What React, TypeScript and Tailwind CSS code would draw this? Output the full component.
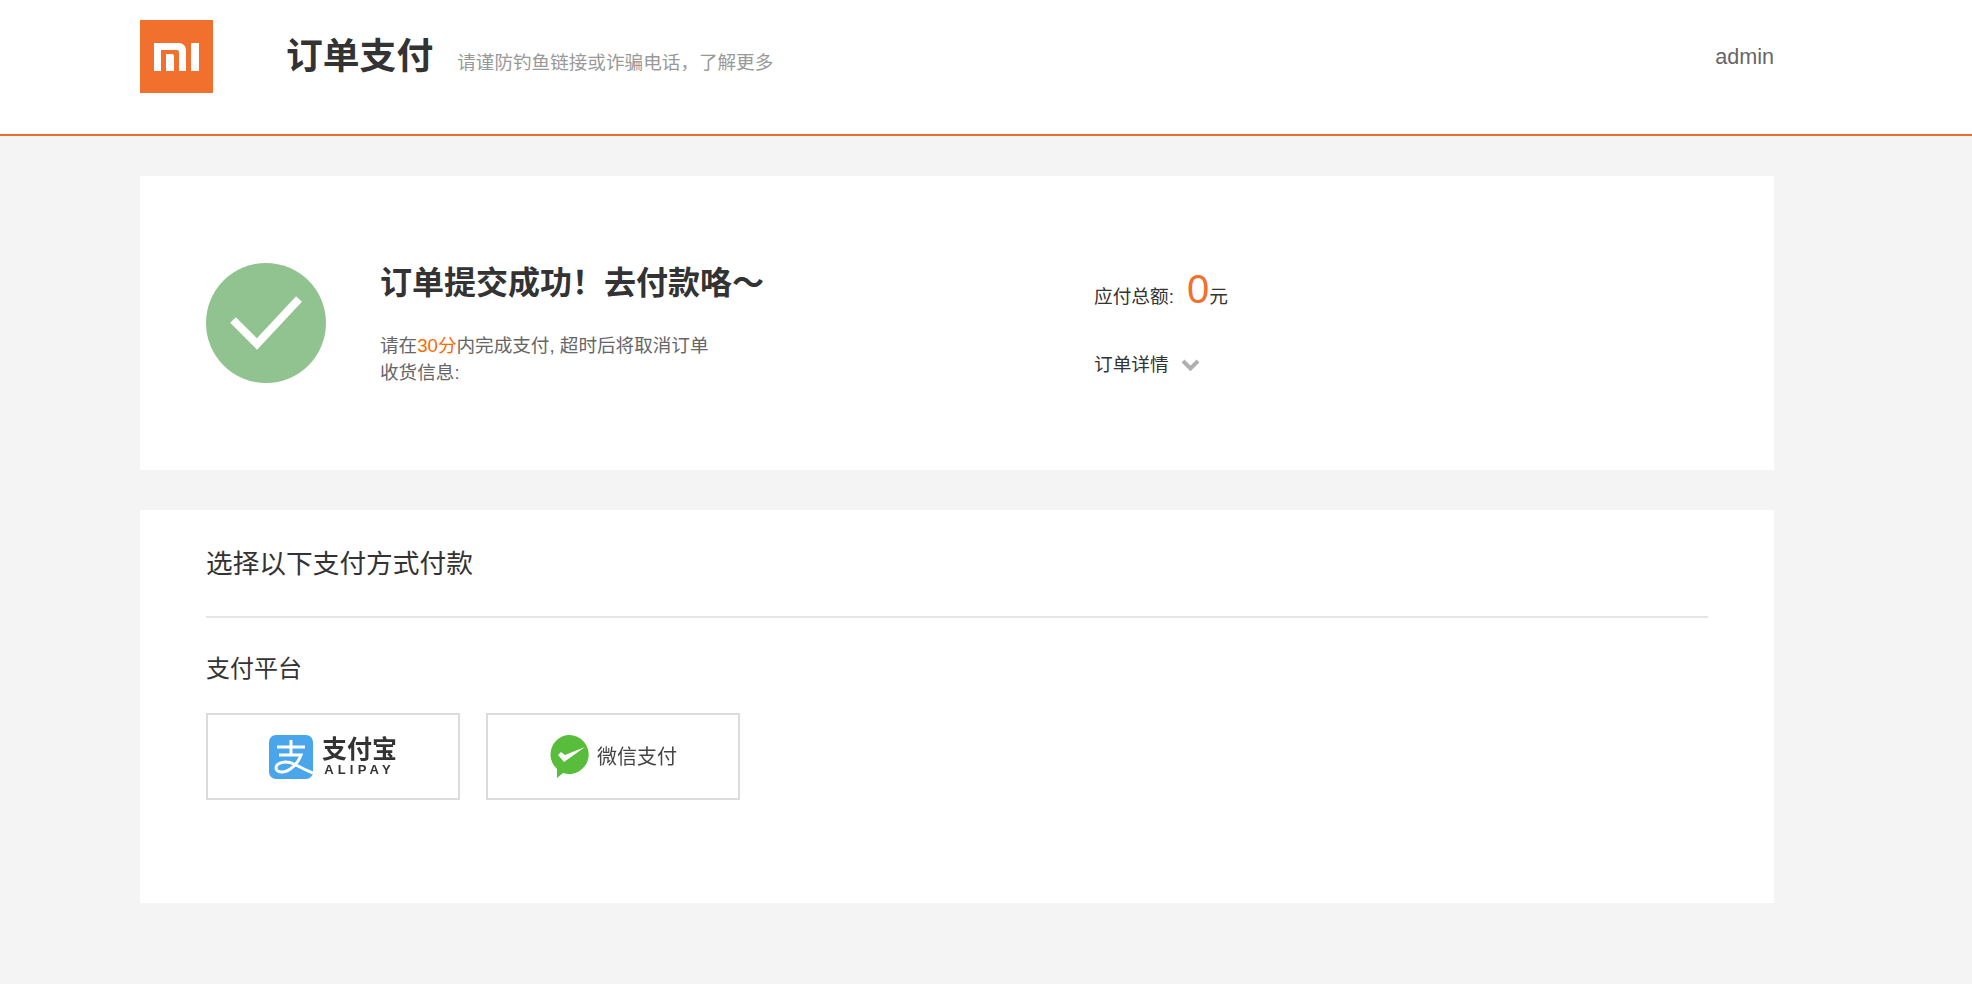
const sans = '[font-family:"Liberation_Sans","Noto_Sans_CJK_SC",sans-serif]';

function MiLogo() {
  return (
    <div className="flex h-[73px] w-[73px] shrink-0 items-center justify-center bg-[#f1702e]">
      <svg className="blur-[0.4px]" width="45" height="28" viewBox="0 0 45 28" fill="none">
        <path d="M0 0h25a7 7 0 0 1 7 7v21h-7V9a2 2 0 0 0-2-2H7v21H0z" fill="#fff" />
        <path d="M12 11h6a2 2 0 0 1 2 2v15h-8z" fill="#fff" />
        <rect x="37" y="0" width="8" height="28" fill="#fff" />
      </svg>
    </div>
  );
}

function SuccessIcon() {
  return (
    <div className="flex h-[120px] w-[120px] shrink-0 items-center justify-center rounded-full bg-[#90c390]">
      <svg className="blur-[0.6px]" width="76" height="58" viewBox="0 0 76 58" fill="none">
        <path d="M5 26l24 24L71 5" stroke="#fff" strokeWidth="8" />
      </svg>
    </div>
  );
}

function AlipayLogo() {
  return (
    <div className="flex items-center gap-[9px] blur-[0.4px]">
      <svg width="44" height="44" viewBox="0 0 44 44" fill="none">
        <rect width="44" height="44" rx="7" fill="#4aa6ea" />
        <path d="M8 12h28M22 5v14M10 20h22c-3 9-12 17-19 17-4 0-6-2-6-4 0-5 9-8 18-4 4 2 9 5 19 9" stroke="#fff" strokeWidth="3" />
      </svg>
      <div className="flex flex-col items-center">
        <span className={`${sans} text-[25px] leading-[26px] font-bold text-[#333]`}>支付宝</span>
        <span className={`${sans} mt-px text-[13px] leading-[14px] font-bold tracking-[4.2px] text-[#333]`}>ALIPAY</span>
      </div>
    </div>
  );
}

function WechatLogo() {
  return (
    <div className="flex items-center gap-[8px] blur-[0.4px]">
      <svg width="40" height="44" viewBox="0 0 40 44" fill="none">
        <path d="M20 0a19.5 19.5 0 1 1-6 38l-6 5 0-9A19.5 19.5 0 0 1 20 0z" fill="#58bd3a" />
        <path d="M9 20l6 7 L36 12 L16 20 L12 17z" fill="#fff" />
      </svg>
      <span className={`${sans} text-[20px] leading-none text-[#444]`}>微信支付</span>
    </div>
  );
}

export default function App() {
  return (
    <div className={`${sans} min-h-[1004px] bg-white`}>
      {/* Header */}
      <header className="h-[136px] border-b-[2px] border-[#ed6b2f] pl-[140px]">
        <div className="flex w-[1634px] items-start pt-[20px]">
          <MiLogo />
          <div className="ml-[73px] flex items-baseline pt-[12px]">
            <h1 className="text-[36.8px] leading-[50px] font-bold text-[#333]">订单支付</h1>
            <span className="ml-[24px] text-[18.6px] text-[#999]">请谨防钓鱼链接或诈骗电话，了解更多</span>
          </div>
          <span className="ml-auto pt-[21px] text-[21.6px] leading-[32px] text-[#666]">admin</span>
        </div>
      </header>

      {/* Main */}
      <main className="h-[848px] bg-[#f4f4f4] pt-[40px] pl-[140px]">
        <section className="flex h-[294px] w-[1634px] bg-white pl-[66px]">
          <div className="pt-[87px]">
            <SuccessIcon />
          </div>
          <div className="ml-[55px] w-[713px] pt-[87px]">
            <h2 className="-ml-px text-[32px] leading-[40px] font-bold text-[#333]">订单提交成功！去付款咯～</h2>
            <p className="mt-[30px] -ml-px text-[18.6px] leading-[26px] text-[#666]">
              请在<span className="text-[#ff6700]">30分</span>内完成支付, 超时后将取消订单
            </p>
            <p className="mt-px -ml-px text-[18.6px] leading-[26px] text-[#666]">收货信息:</p>
          </div>
          <div className="pt-[90px]">
            <div className="flex h-[46px] items-baseline text-[18.7px] text-[#333]">
              <span>应付总额:</span>
              <span className="ml-[13px] text-[40px] leading-[46px] text-[#f1702e]">0</span>
              <span>元</span>
            </div>
            <div className="mt-[40px] flex items-center text-[18.7px] leading-[26px] text-[#333]">
              <span>订单详情</span>
              <svg className="ml-[12px]" width="19" height="12" viewBox="0 0 19 12" fill="none">
                <path d="M2 2l7.5 7.5L17 2" stroke="#b0b0b0" strokeWidth="4" />
              </svg>
            </div>
          </div>
        </section>

        <section className="mt-[40px] h-[393px] w-[1634px] bg-white px-[66px]">
          <h3 className="h-[108px] border-b-[2px] border-[#e5e5e5] pt-[37px] text-[26.7px] leading-[34px] font-normal text-[#333]">
            选择以下支付方式付款
          </h3>
          <p className="mt-[36px] text-[24px] leading-[30px] text-[#333]">支付平台</p>
          <div className="mt-[29px] flex gap-[26px]">
            <div className="flex h-[87px] w-[254px] items-center justify-center border-[2px] border-[#dcdcdc]">
              <AlipayLogo />
            </div>
            <div className="flex h-[87px] w-[254px] items-center justify-center border-[2px] border-[#dcdcdc]">
              <WechatLogo />
            </div>
          </div>
        </section>
      </main>
    </div>
  );
}
